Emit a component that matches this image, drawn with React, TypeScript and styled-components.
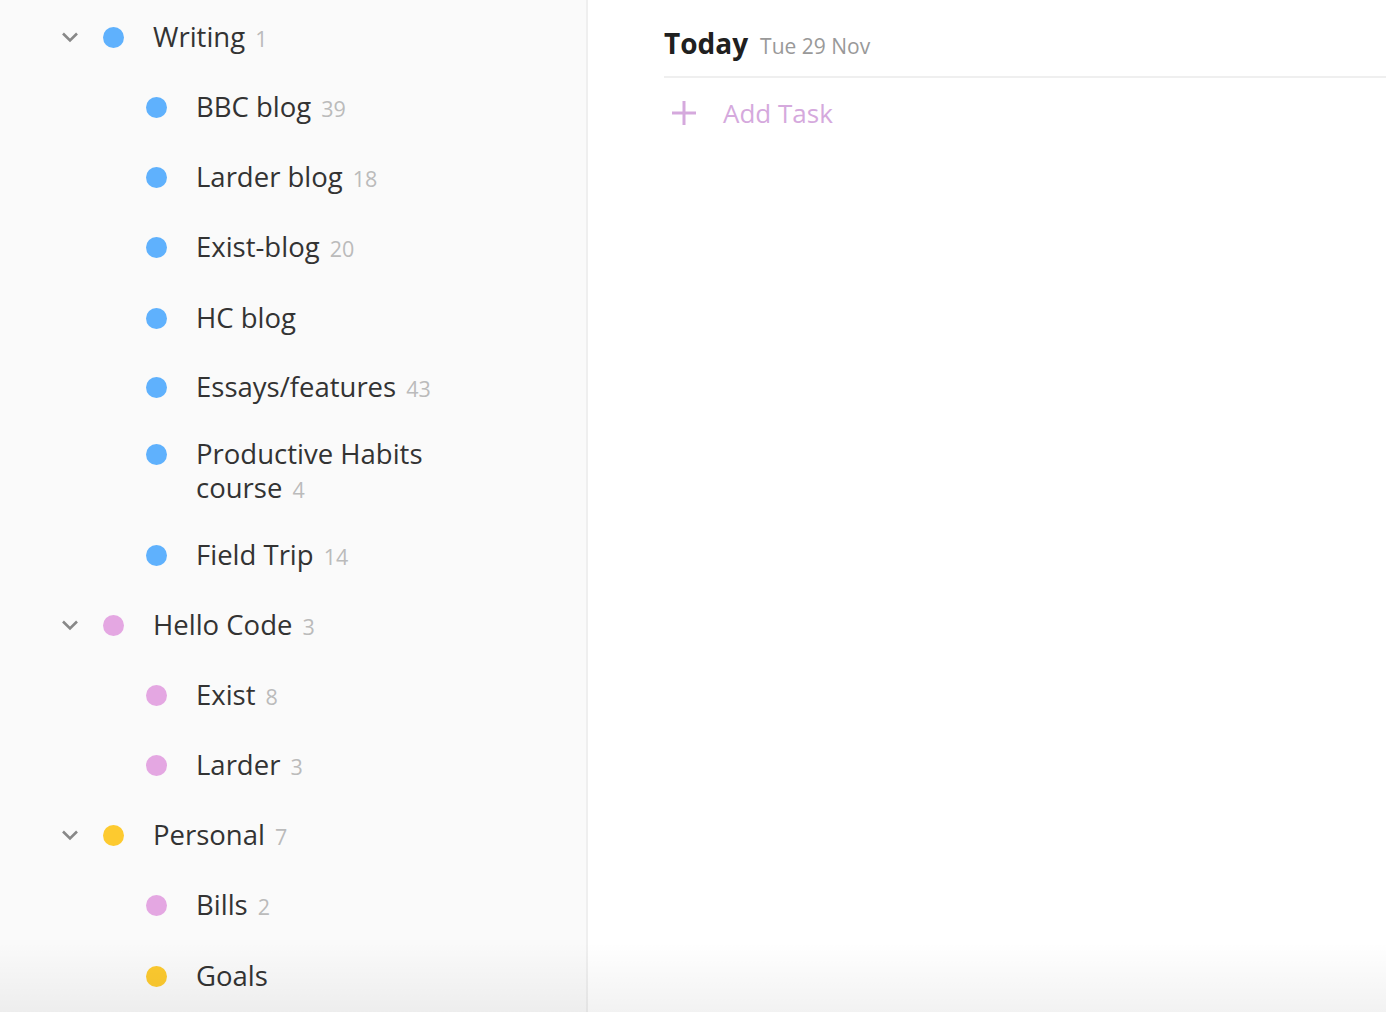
import React, { FC } from 'react';
import styled, { createGlobalStyle } from 'styled-components';

const GlobalStyle = createGlobalStyle`
    html, body {
        margin: 0;
        padding: 0;
        height: 100%;
        overflow: hidden;
    }
    body {
        font-family: 'Open Sans', 'Noto Sans', sans-serif;
        background: #fff;
        color: #333;
    }
`;

const Layout = styled.div`
    display: flex;
    width: 1386px;
    height: 1012px;
    position: relative;
    overflow: hidden;

    &::after {
        content: '';
        position: absolute;
        left: 0;
        right: 0;
        bottom: 0;
        height: 70px;
        background: linear-gradient(to bottom, rgba(0, 0, 0, 0), rgba(0, 0, 0, 0.05));
        pointer-events: none;
    }
`;

const Sidebar = styled.nav`
    width: 588px;
    flex: 0 0 588px;
    background: #fafafa;
    border-right: 2px solid #efefef;
    padding-top: 3px;
    box-sizing: border-box;
`;

const ProjectList = styled.ul`
    list-style: none;
    margin: 0;
    padding: 0;
`;

const Row = styled.li<{ $child?: boolean }>`
    display: flex;
    align-items: center;
    min-height: 70px;
    box-sizing: border-box;
    padding: 14px 0 14px ${({ $child }) => ($child ? '145px' : '58px')};
`;

const Entry = styled.div`
    display: flex;
    align-items: flex-start;
`;

const Toggle = styled.span`
    width: 24px;
    height: 34px;
    display: flex;
    align-items: center;
    justify-content: center;
    margin-right: 20px;
`;

const DotCell = styled.span`
    width: 22px;
    height: 34px;
    display: flex;
    align-items: center;
    justify-content: center;
    margin-right: 29px;
    flex-shrink: 0;
`;

const Dot = styled.span<{ $color: string }>`
    width: 21px;
    height: 21px;
    border-radius: 50%;
    background: ${({ $color }) => $color};
`;

const Name = styled.span`
    font-size: 27.5px;
    line-height: 34px;
    color: #333;
    max-width: 260px;
`;

const Count = styled.span`
    font-size: 21.5px;
    line-height: 34px;
    color: #bbb;
    margin-left: 10px;
`;

const Main = styled.main`
    flex: 1;
    padding: 20px 0 0 76px;
`;

const Header = styled.header`
    display: flex;
    align-items: baseline;
    padding-bottom: 10px;
    border-bottom: 2px solid #efefef;
`;

const Title = styled.h1`
    margin: 0;
    font-size: 28px;
    font-weight: 700;
    color: #202020;
    line-height: 46px;
`;

const DateLabel = styled.span`
    font-size: 21px;
    color: #999;
    margin-left: 12px;
`;

const AddTask = styled.button`
    display: flex;
    align-items: center;
    gap: 27px;
    border: none;
    background: none;
    padding: 0 0 0 8px;
    margin-top: 17px;
    font-family: inherit;
    font-size: 26px;
    color: #d5a9dd;
    cursor: pointer;
`;

const BLUE = '#5fb1fd';
const PINK = '#e4a7e2';
const YELLOW = '#fdca2f';

interface Project {
    name: string;
    count?: number;
    color: string;
    parent?: boolean;
}

const projects: Project[] = [
    { name: 'Writing', count: 1, color: BLUE, parent: true },
    { name: 'BBC blog', count: 39, color: BLUE },
    { name: 'Larder blog', count: 18, color: BLUE },
    { name: 'Exist-blog', count: 20, color: BLUE },
    { name: 'HC blog', color: BLUE },
    { name: 'Essays/features', count: 43, color: BLUE },
    { name: 'Productive Habits course', count: 4, color: BLUE },
    { name: 'Field Trip', count: 14, color: BLUE },
    { name: 'Hello Code', count: 3, color: PINK, parent: true },
    { name: 'Exist', count: 8, color: PINK },
    { name: 'Larder', count: 3, color: PINK },
    { name: 'Personal', count: 7, color: YELLOW, parent: true },
    { name: 'Bills', count: 2, color: PINK },
    { name: 'Goals', color: YELLOW },
];

const Chevron: FC = () => (
    <svg width="18" height="12" viewBox="0 0 18 12">
        <path d="M2 2.5 L9 9.5 L16 2.5" fill="none" stroke="#888" strokeWidth="2.6" />
    </svg>
);

const Plus: FC = () => (
    <svg width="24" height="24" viewBox="0 0 24 24">
        <path d="M12 0 V24 M0 12 H24" stroke="#d5a9dd" strokeWidth="3" />
    </svg>
);

const App: FC = () => (
    <>
        <GlobalStyle />
        <Layout>
            <Sidebar>
                <ProjectList>
                    {projects.map((p) => (
                        <Row key={p.name} $child={!p.parent}>
                            <Entry>
                                {p.parent && (
                                    <Toggle>
                                        <Chevron />
                                    </Toggle>
                                )}
                                <DotCell>
                                    <Dot $color={p.color} />
                                </DotCell>
                                <Name>
                                    {p.name}
                                    {p.count !== undefined && <Count>{p.count}</Count>}
                                </Name>
                            </Entry>
                        </Row>
                    ))}
                </ProjectList>
            </Sidebar>
            <Main>
                <Header>
                    <Title>Today</Title>
                    <DateLabel>Tue 29 Nov</DateLabel>
                </Header>
                <AddTask>
                    <Plus />
                    Add Task
                </AddTask>
            </Main>
        </Layout>
    </>
);

export default App;
